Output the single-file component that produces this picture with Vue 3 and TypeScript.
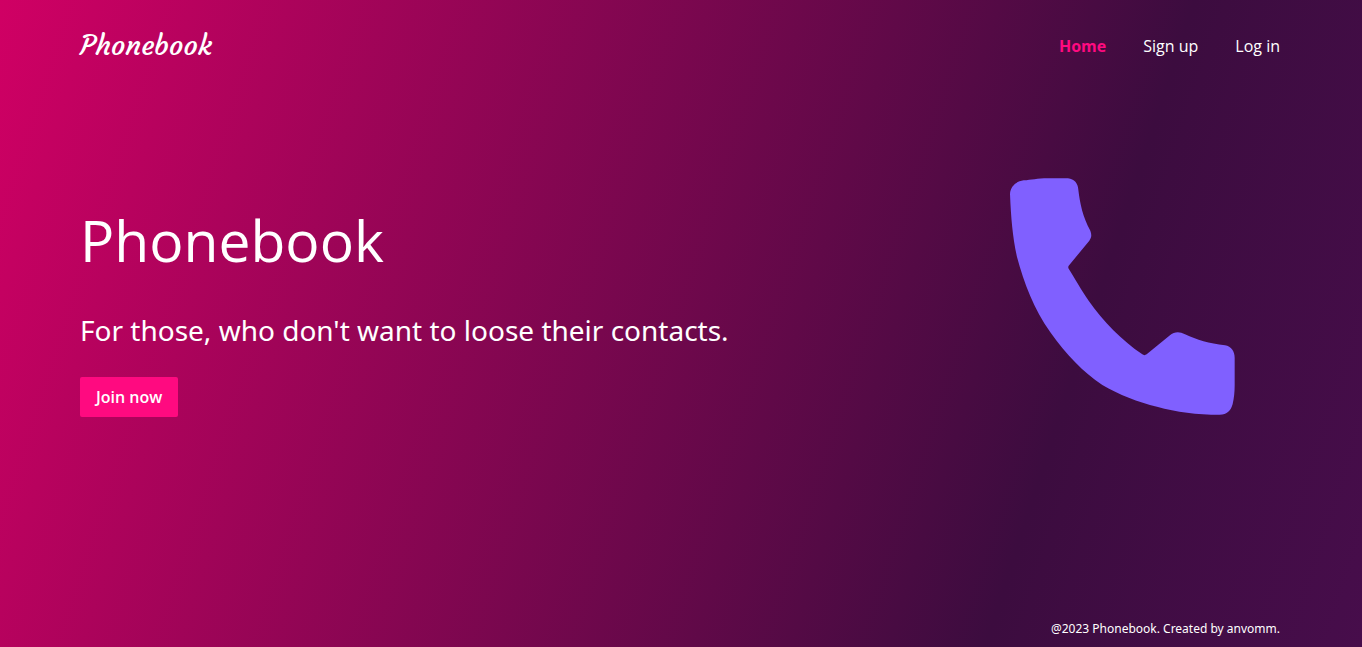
<script setup lang="ts">
interface NavItem {
  label: string
  href: string
  active: boolean
}

const navItems: NavItem[] = [
  { label: 'Home', href: '#home', active: true },
  { label: 'Sign up', href: '#signup', active: false },
  { label: 'Log in', href: '#login', active: false },
]
</script>

<template>
  <div class="page">
    <header class="header">
      <a class="logo" href="#home">Phonebook</a>
      <nav class="nav">
        <a
          v-for="item in navItems"
          :key="item.label"
          :href="item.href"
          class="nav-link"
          :class="{ active: item.active }"
        >{{ item.label }}</a>
      </nav>
    </header>

    <main class="hero">
      <section class="intro">
        <h1 class="title">Phonebook</h1>
        <p class="tagline">For those, who don't want to loose their contacts.</p>
        <button class="join" type="button">Join now</button>
      </section>
      <svg class="phone" viewBox="60 53 675 711" aria-hidden="true">
        <path
          fill="#8060ff"
          d="M101 60C124 58 141 54 174 53.500L234 54C253 56 264 69 265 88C270 130 278 168 301 211C306 225 304 233 298 241L238 314Q232 320 237 327C254 354 275 391 296 421C340 484 396 540 457 582Q463 587 470 582L538 526C556 512 569 514 585 522C621 539 657 549 705 555C724 558 734 574 734 592L734 675C734 695 732 714 728 731C723 751 711 763 689 763C620 763 560 755 501 739C445 726 386 703 337 674C280 637 229 583 181 516C132 446 102 369 81 290C68 230 63 174 60 101C61 79 78 63 101 60Z"
        />
      </svg>
    </main>

    <footer class="footer">@2023 Phonebook. Created by anvomm.</footer>
  </div>
</template>

<style>
body {
  margin: 0;
}
</style>

<style scoped>
.page {
  display: flex;
  flex-direction: column;
  box-sizing: border-box;
  min-height: 100vh;
  padding: 0 82px 0 80px;
  color: #fff;
  font-family: "Segoe UI", "Open Sans", "Noto Sans", sans-serif;
  font-size: 16px;
  line-height: 24px;
  background: linear-gradient(108deg, #d00064 0%, #3c0c3f 76%, #470d4b 100%);
}

.header {
  display: flex;
  align-items: center;
  justify-content: space-between;
  height: 92px;
}

.logo {
  color: #fff;
  font-family: Courgette, cursive;
  font-size: 28px;
  font-weight: 400;
  line-height: 40px;
  text-decoration: none;
}

.nav {
  display: flex;
  gap: 37px;
}

.nav-link {
  color: #fff;
  text-decoration: none;
}

.nav-link.active {
  color: #ff0a80;
  font-weight: 700;
}

.hero {
  display: flex;
  flex: 1;
  align-items: center;
  justify-content: space-between;
  padding-bottom: 119px;
}

.intro {
  display: flex;
  flex-direction: column;
  align-items: flex-start;
  padding-top: 25px;
}

.title {
  margin: 0;
  font-size: 57px;
  font-weight: 400;
  line-height: 80px;
}

.tagline {
  margin: 28px 0 25px;
  font-family: "Segoe UI", "Noto Sans", sans-serif;
  font-size: 28px;
  line-height: 44px;
}

.join {
  height: 40px;
  padding: 0 16px;
  border: 0;
  border-radius: 2px;
  color: #fff;
  background: #ff0a80;
  font: inherit;
  font-weight: 600;
}

.phone {
  flex: none;
  width: 225px;
  height: 237px;
  margin-right: 45px;
}

.footer {
  padding-bottom: 8px;
  font-family: "Segoe UI", "Noto Sans", sans-serif;
  font-size: 12px;
  line-height: 20px;
  text-align: right;
}
</style>
